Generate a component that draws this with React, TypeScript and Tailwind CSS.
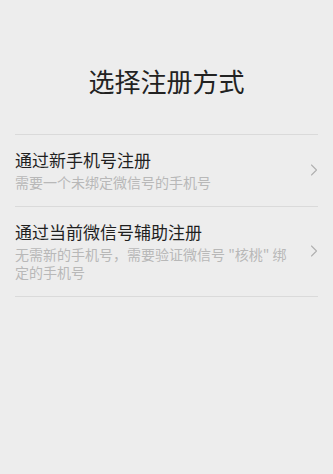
import { ChevronRight } from 'lucide-react';

const options = [
  {
    title: '通过新手机号注册',
    desc: '需要一个未绑定微信号的手机号',
  },
  {
    title: '通过当前微信号辅助注册',
    desc: '无需新的手机号，需要验证微信号 "核桃" 绑定的手机号',
  },
];

export default function App() {
  return (
    <div
      className="min-h-[474px] w-full bg-[#ededed] pt-[64px]"
      style={{ fontFamily: '"Noto Sans CJK SC", "Noto Sans", sans-serif' }}
    >
      <h1 className="text-center text-[26px] leading-[34px] text-[#222]">选择注册方式</h1>

      <div className="mx-[15px] mt-[36px] border-t border-[#dadada]">
        {options.map((o) => (
          <div
            key={o.title}
            className="flex items-center justify-between border-b border-[#dadada] pt-[14px] pb-[15px]"
          >
            <div className="w-[280px]">
              <p className="text-[17px] leading-[22px] text-[#1f1f1f]">{o.title}</p>
              <p className="mt-[2px] text-[14px] leading-[18px] text-[#b8b8b8]">{o.desc}</p>
            </div>
            <ChevronRight className="mr-[-6px] h-[20px] w-[20px] text-[#b0b0b0]" strokeWidth={1.3} />
          </div>
        ))}
      </div>
    </div>
  );
}
